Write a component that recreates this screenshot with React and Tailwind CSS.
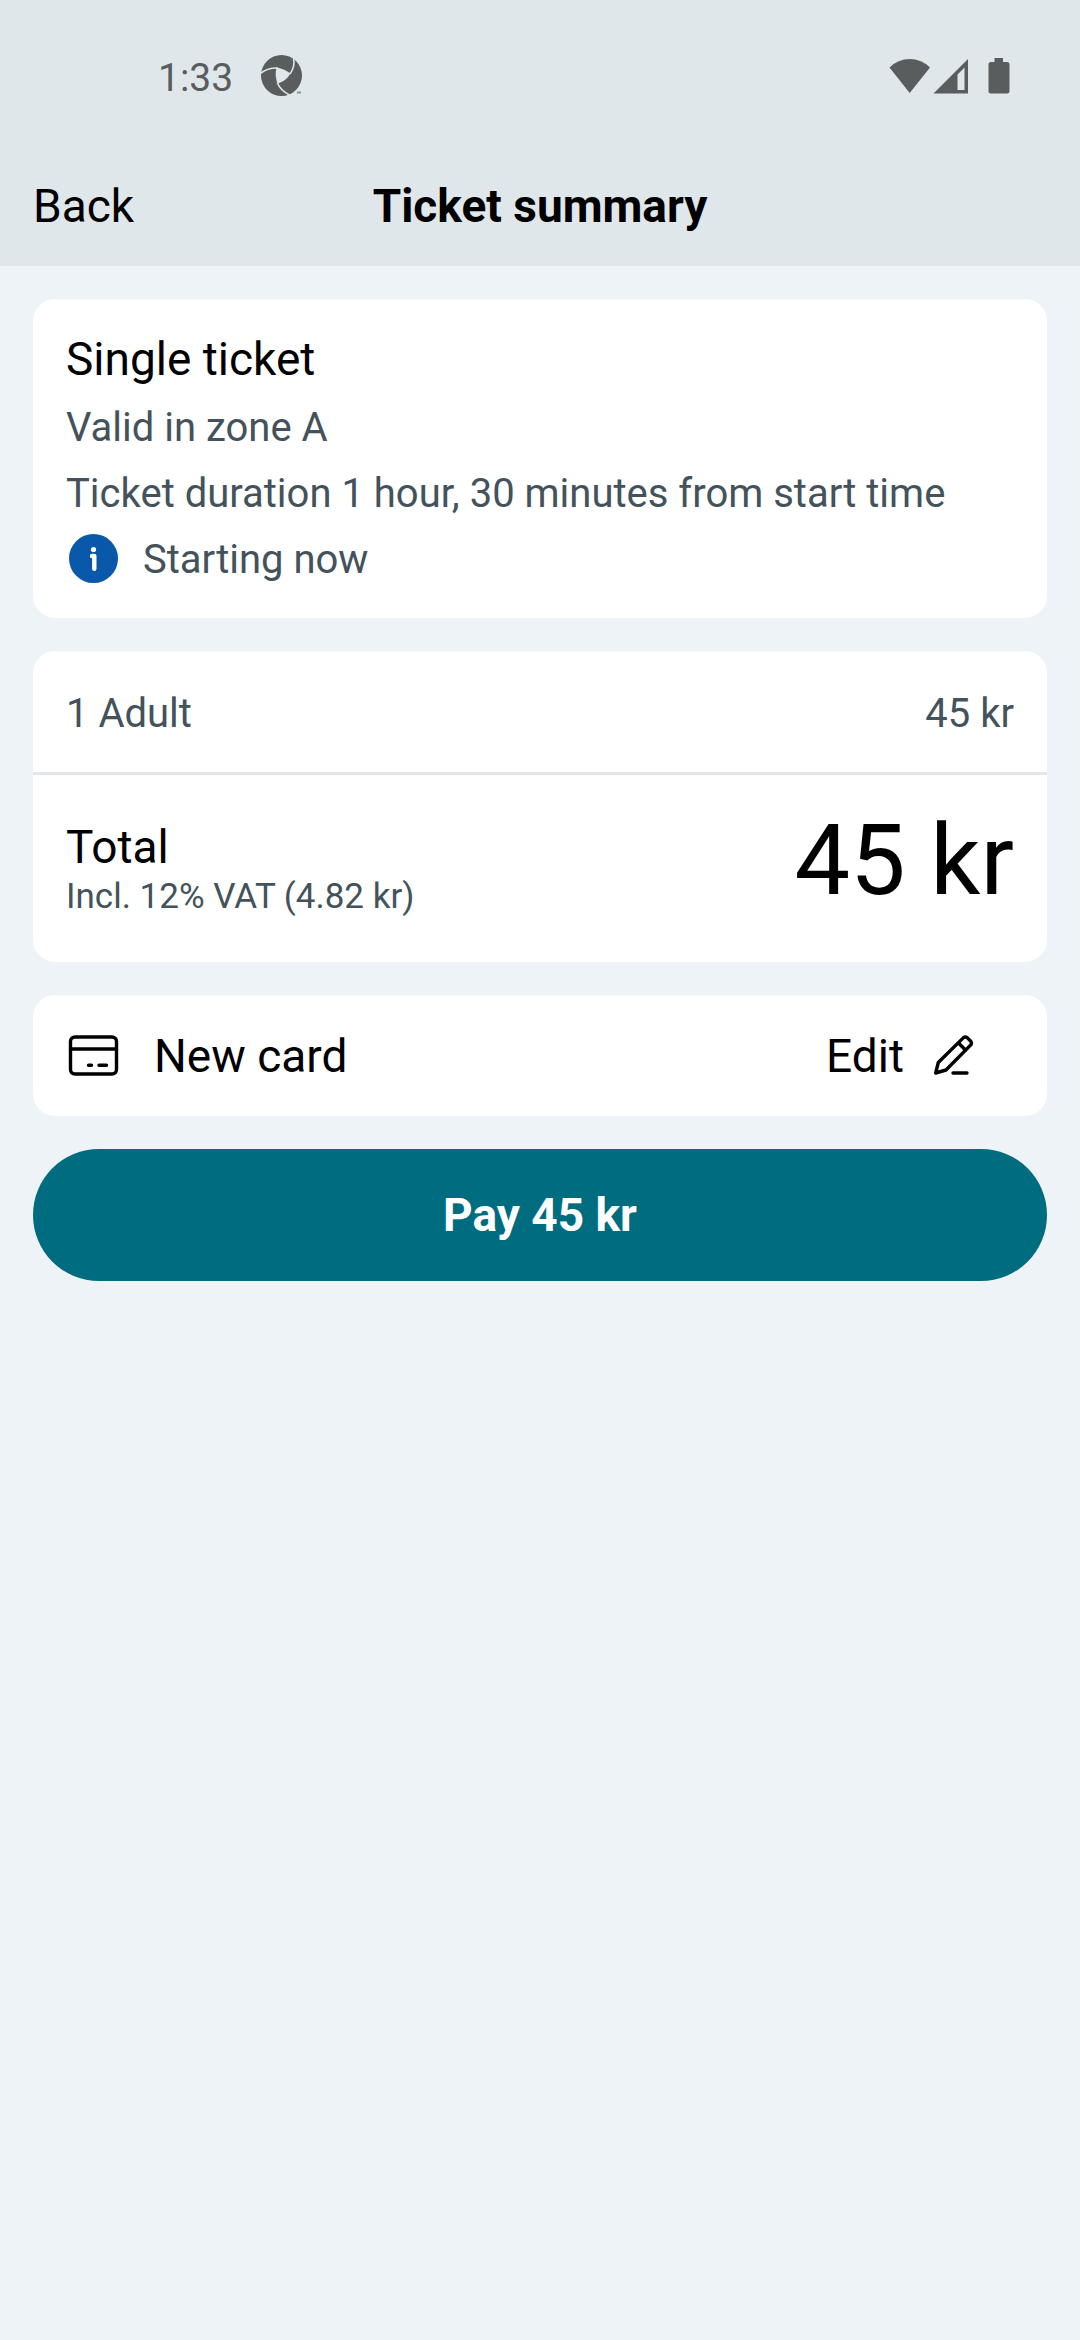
const TITLE = "text-[46px] leading-[54px]";
const BODY = "text-[40px] leading-[66px] text-[#43525b]";
const CARD = "rounded-[22px] bg-white";

function ApertureIcon() {
  return (
    <svg width="42" height="42" viewBox="0 0 42 42" aria-hidden="true">
      <circle cx="20.5" cy="20.5" r="20.5" fill="#5a5d5d" />
      <path d="M15.5 12.5 Q22.5 13.500 29.500 18.5 Q25 26.500 16.500 28.500 Q13.500 20.500 15.500 12.500 Z" fill="#e0e7ea" />
      <g fill="none" stroke="#e0e7ea" strokeWidth="1.6">
        <path d="M0 18 Q7 12.500 17 13" />
        <path d="M32.500 3.500 Q34.500 11 29 19" />
        <path d="M16.200 27.500 Q19.500 35.500 28.500 40" />
      </g>
      <path d="M36 36.500 H40 V38.500 H36 Z" fill="#8d9293" />
    </svg>
  );
}

function WifiIcon() {
  return (
    <svg width="42" height="36" viewBox="0 0 42 36" fill="#5a5d5d" aria-hidden="true">
      <path d="M0.500 9.500 Q9 1 20.700 1 Q32.500 1 41 9.500 L20.700 35 Z" />
    </svg>
  );
}

function SignalIcon() {
  return (
    <svg width="36" height="36" viewBox="0 0 36 36" fill="#5a5d5d" aria-hidden="true">
      <path fillRule="evenodd" d="M35 1 V35.500 H0.500 Z M24.500 16.500 V32 H31.500 V9.500 Z" />
    </svg>
  );
}

function BatteryIcon() {
  return (
    <svg width="22" height="36" viewBox="0 0 22 36" fill="#5a5d5d" aria-hidden="true">
      <path d="M6.500 0 H15 V4 H19 Q21.500 4 21.500 6.500 V33 Q21.500 35.500 19 35.500 H3 Q0.500 35.500 0.500 33 V6.500 Q0.500 4 3 4 H6.500 Z" />
    </svg>
  );
}

function InfoIcon() {
  return (
    <svg className="shrink-0" width="55" height="55" viewBox="0 0 55 55" aria-hidden="true">
      <circle cx="27.500" cy="25.500" r="24.500" fill="#0a58aa" />
      <circle cx="27.500" cy="16.500" r="2.600" fill="white" />
      <path d="M26 23 H28.300 V35.800" fill="none" stroke="white" strokeWidth="4.400" strokeLinecap="round" strokeLinejoin="round" />
    </svg>
  );
}

function CardIcon() {
  return (
    <svg className="shrink-0" width="55" height="55" viewBox="0 0 55 55" fill="none" stroke="black" strokeWidth="3.400" strokeLinecap="round" aria-hidden="true">
      <rect x="4.500" y="9" width="46" height="37" rx="4.500" />
      <path d="M4.500 21 H50.500 M22.500 37.200 H25.500 M33 37.200 H40.500" />
    </svg>
  );
}

function PencilIcon() {
  return (
    <svg className="shrink-0" width="55" height="55" viewBox="0 0 55 55" fill="none" stroke="black" strokeWidth="3.400" strokeLinecap="round" strokeLinejoin="round" aria-hidden="true">
      <path d="M9.700 45 L12.300 34.500 L37.500 9.600 Q39.300 8.200 41.100 9.600 L44.800 13.300 Q46.200 15.100 44.800 16.900 L20 42 Z M32.500 15 L39.700 22.200 M27 45 H41" />
    </svg>
  );
}

export default function App() {
  return (
    <div className="min-h-screen bg-[#edf3f6] font-[Roboto,sans-serif] text-black">
      <header className="bg-[#e0e7ea] pb-[33px]">
        <div className="flex items-center justify-between pt-[50px] pr-[70px] pl-[158px]">
          <div className="flex items-center gap-[28px]">
            <span className="pt-1 text-[39px] leading-[48px] text-[#5a5d5d]">1:33</span>
            <ApertureIcon />
          </div>
          <div className="flex items-center">
            <WifiIcon />
            <span className="ml-[2px]"><SignalIcon /></span>
            <span className="ml-[19px]"><BatteryIcon /></span>
          </div>
        </div>
        <div className="mt-[77px] grid grid-cols-[1fr_auto_1fr] px-[33px]">
          <button type="button" className={`${TITLE} justify-self-start`}>Back</button>
          <h1 className={`${TITLE} font-bold`}>Ticket summary</h1>
        </div>
      </header>

      <main className="flex flex-col gap-[33px] p-[33px]">
        <section className={`${CARD} px-[33px] pt-[33px] pb-[25px]`}>
          <h2 className={`${TITLE} mb-[9px]`}>Single ticket</h2>
          <p className={BODY}>Valid in zone A</p>
          <p className={BODY}>Ticket duration 1 hour, 30 minutes from start time</p>
          <div className="flex items-center gap-[22px]">
            <InfoIcon />
            <p className={BODY}>Starting now</p>
          </div>
        </section>

        <section className={CARD}>
          <div className={`${BODY} flex justify-between border-b-[3px] border-[#e0e7ea] px-[33px] pt-[30px] pb-[25px]`}>
            <span>1 Adult</span>
            <span>45 kr</span>
          </div>
          <div className="flex justify-between px-[33px] pt-[27px] pb-[42px]">
            <div className="pt-[18px]">
              <p className={TITLE}>Total</p>
              <p className="text-[35px] leading-[46px] text-[#43525b]">Incl. 12% VAT (4.82 kr)</p>
            </div>
            <p className="text-[99px] leading-[116px]">45 kr</p>
          </div>
        </section>

        <section className={`${CARD} flex items-center justify-between py-[33px] pr-[66px] pl-[33px]`}>
          <div className="flex items-center gap-[33px]">
            <CardIcon />
            <span className={TITLE}>New card</span>
          </div>
          <button type="button" className={`${TITLE} flex items-center gap-[22px]`}>
            Edit
            <PencilIcon />
          </button>
        </section>

        <button type="button" className={`${TITLE} rounded-full bg-[#006c80] py-[39px] font-bold text-white`}>
          Pay 45 kr
        </button>
      </main>
    </div>
  );
}
